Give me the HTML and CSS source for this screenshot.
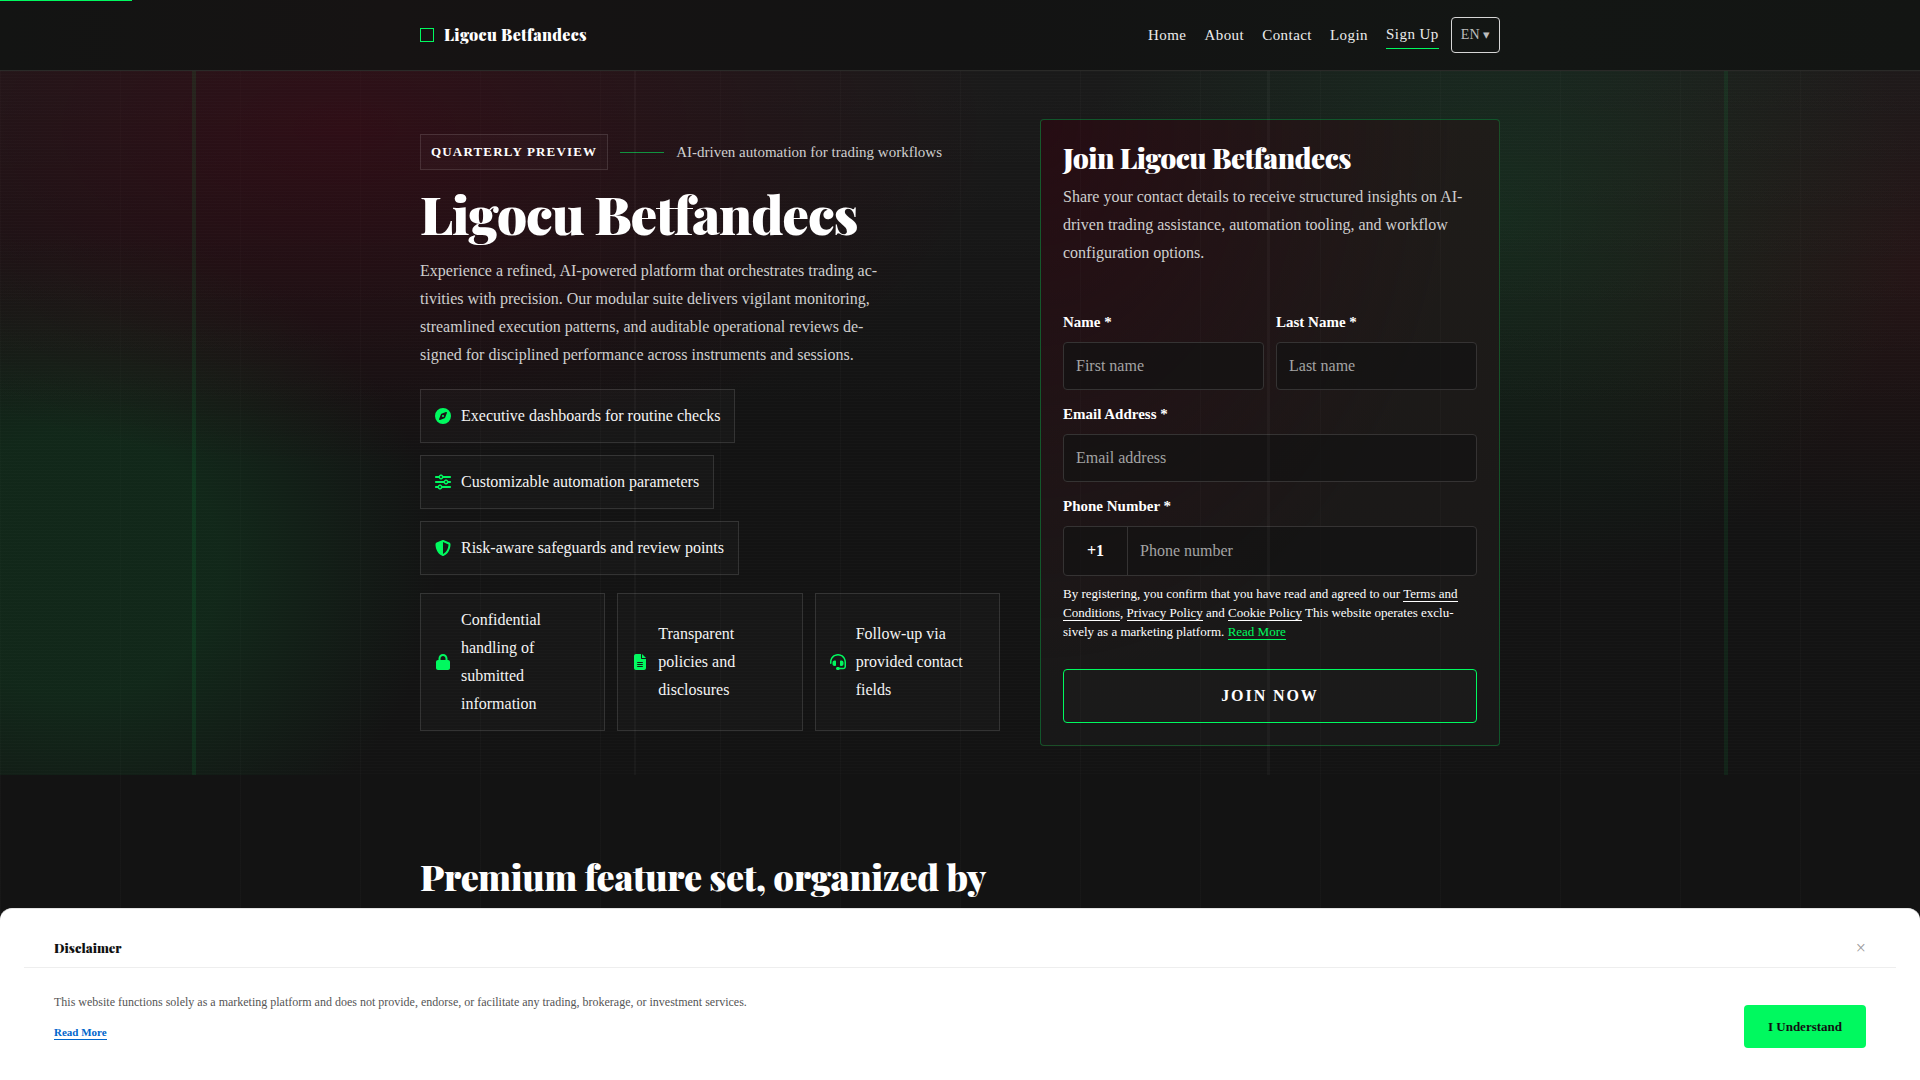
FILE: index.html
```html
<!DOCTYPE html>
<html lang="en">
<head>
    <meta charset="UTF-8">
    <meta name="viewport" content="width=device-width, initial-scale=1.0">
    <title>Ligocu Betfandecs</title>
    <link rel="stylesheet" href="styles.css">
</head>
<body>

<div class="scroll-progress"></div>

<header class="site-header">
    <div class="container header-inner">
        <a class="logo" href="#"><span class="logo-mark"></span>Ligocu Betfandecs</a>
        <nav class="nav">
            <a href="#">Home</a>
            <a href="#">About</a>
            <a href="#">Contact</a>
            <a href="#">Login</a>
            <a href="#signup" class="nav-cta">Sign Up</a>
            <button type="button" class="lang-button">EN <span class="caret">▾</span></button>
        </nav>
    </div>
</header>

<main>
    <section class="hero">
        <div class="container hero-grid">
            <div class="hero-copy">
                <div class="eyebrow">
                    <span class="badge">Quarterly preview</span>
                    <span class="eyebrow-line"></span>
                    <span class="eyebrow-text">AI-driven automation for trading workflows</span>
                </div>
                <h1>Ligocu Betfandecs</h1>
                <p class="lead">Experience a refined, AI-powered platform that orchestrates trading ac&shy;tivities with precision. Our modular suite delivers vigilant monitoring, streamlined execution patterns, and auditable operational reviews de&shy;signed for disciplined performance across instruments and sessions.</p>

                <ul class="features">
                    <li class="chip">
                        <svg class="icon" viewBox="0 0 512 512"><path d="M256 512A256 256 0 1 0 256 0a256 256 0 1 0 0 512zm50.7-186.9L162.4 380.6c-19.4 7.5-38.5-11.6-31-31l55.5-144.3c3.3-8.5 9.9-15.1 18.4-18.4l144.3-55.5c19.4-7.5 38.5 11.6 31 31L325.1 306.7c-3.2 8.5-9.9 15.1-18.4 18.4zM288 256a32 32 0 1 0 -64 0 32 32 0 1 0 64 0z"/></svg>
                        <span>Executive dashboards for routine checks</span>
                    </li>
                    <li class="chip">
                        <svg class="icon" viewBox="0 0 512 512"><path d="M0 416c0 17.7 14.3 32 32 32l54.7 0c12.3 28.3 40.5 48 73.3 48s61-19.7 73.3-48L480 448c17.7 0 32-14.3 32-32s-14.3-32-32-32l-246.7 0c-12.3-28.3-40.5-48-73.3-48s-61 19.7-73.3 48L32 384c-17.7 0-32 14.3-32 32zm128 0a32 32 0 1 1 64 0 32 32 0 1 1 -64 0zM320 256a32 32 0 1 1 64 0 32 32 0 1 1 -64 0zm32-80c-32.8 0-61 19.7-73.3 48L32 224c-17.7 0-32 14.3-32 32s14.3 32 32 32l246.7 0c12.3 28.3 40.5 48 73.3 48s61-19.7 73.3-48l54.7 0c17.7 0 32-14.3 32-32s-14.3-32-32-32l-54.7 0c-12.3-28.3-40.5-48-73.3-48zM192 128a32 32 0 1 1 0-64 32 32 0 1 1 0 64zm73.3-64C253 35.7 224.8 16 192 16s-61 19.7-73.3 48L32 64C14.3 64 0 78.3 0 96s14.3 32 32 32l86.7 0c12.3 28.3 40.5 48 73.3 48s61-19.7 73.3-48L480 128c17.7 0 32-14.3 32-32s-14.3-32-32-32L265.3 64z"/></svg>
                        <span>Customizable automation parameters</span>
                    </li>
                    <li class="chip">
                        <svg class="icon" viewBox="0 0 512 512"><path d="M256 0c4.6 0 9.2 1 13.4 2.9L457.7 82.8c22 9.3 38.4 31 38.3 57.2c-.5 99.2-41.3 280.7-213.6 363.2c-16.7 8-36.1 8-52.8 0C57.3 420.7 16.5 239.2 16 140c-.1-26.2 16.3-47.9 38.3-57.2L242.7 2.9C246.8 1 251.4 0 256 0zm0 66.8V444.8C394 378 431.1 230.1 432 141.4L256 66.8z"/></svg>
                        <span>Risk-aware safeguards and review points</span>
                    </li>
                </ul>

                <ul class="assurances">
                    <li class="chip">
                        <svg class="icon" viewBox="0 0 448 512"><path d="M144 144v48H304V144c0-44.2-35.8-80-80-80s-80 35.8-80 80zM80 192V144C80 64.5 144.5 0 224 0s144 64.5 144 144v48h16c35.3 0 64 28.7 64 64V448c0 35.3-28.7 64-64 64H64c-35.3 0-64-28.7-64-64V256c0-35.3 28.7-64 64-64H80z"/></svg>
                        <span>Confidential handling of submitted information</span>
                    </li>
                    <li class="chip">
                        <svg class="icon" viewBox="0 0 384 512"><path d="M64 0C28.7 0 0 28.7 0 64V448c0 35.3 28.7 64 64 64H320c35.3 0 64-28.7 64-64V160H256c-17.7 0-32-14.3-32-32V0H64zM256 0V128H384L256 0zM112 256H272c8.8 0 16 7.2 16 16s-7.2 16-16 16H112c-8.8 0-16-7.2-16-16s7.2-16 16-16zm0 64H272c8.8 0 16 7.2 16 16s-7.2 16-16 16H112c-8.8 0-16-7.2-16-16s7.2-16 16-16zm0 64H272c8.8 0 16 7.2 16 16s-7.2 16-16 16H112c-8.8 0-16-7.2-16-16s7.2-16 16-16z"/></svg>
                        <span>Transparent policies and disclosures</span>
                    </li>
                    <li class="chip">
                        <svg class="icon" viewBox="0 0 512 512"><path d="M256 48C141.1 48 48 141.1 48 256v40c0 13.3-10.7 24-24 24s-24-10.7-24-24V256C0 114.6 114.6 0 256 0S512 114.6 512 256V400.1c0 48.6-39.4 88-88.1 88L313.6 488c-8.3 14.3-23.8 24-41.6 24H240c-26.5 0-48-21.5-48-48s21.5-48 48-48h32c17.8 0 33.3 9.7 41.6 24l110.4 .1c22.1 0 40-17.9 40-40V256c0-114.9-93.1-208-208-208zM144 208h16c17.7 0 32 14.3 32 32V352c0 17.7-14.3 32-32 32H144c-35.3 0-64-28.7-64-64V272c0-35.3 28.7-64 64-64zm224 0c35.3 0 64 28.7 64 64v48c0 35.3-28.7 64-64 64H352c-17.7 0-32-14.3-32-32V240c0-17.7 14.3-32 32-32h16z"/></svg>
                        <span>Follow-up via provided contact fields</span>
                    </li>
                </ul>
            </div>

            <div class="signup-card" id="signup">
                <h2>Join Ligocu Betfandecs</h2>
                <p class="signup-intro">Share your contact details to receive structured insights on AI-driven trading assistance, automation tooling, and workflow configuration options.</p>

                <form class="signup-form">
                    <div class="field-row">
                        <div class="field">
                            <label for="firstName">Name *</label>
                            <input type="text" id="firstName" name="firstName" placeholder="First name" required>
                        </div>
                        <div class="field">
                            <label for="lastName">Last Name *</label>
                            <input type="text" id="lastName" name="lastName" placeholder="Last name" required>
                        </div>
                    </div>
                    <div class="field">
                        <label for="email">Email Address *</label>
                        <input type="email" id="email" name="email" placeholder="Email address" required>
                    </div>
                    <div class="field">
                        <label for="phone">Phone Number *</label>
                        <div class="phone-group">
                            <span class="phone-code">+1</span>
                            <input type="tel" id="phone" name="phone" placeholder="Phone number" required>
                        </div>
                    </div>
                    <p class="legal">By registering, you confirm that you have read and agreed to our <a href="#">Terms and Conditions</a>, <a href="#">Privacy Policy</a> and <a href="#">Cookie Policy</a> This website operates exclu&shy;sively as a marketing platform. <a href="#" class="read-more">Read More</a></p>
                    <button type="submit" class="submit-button">Join now</button>
                </form>
            </div>
        </div>
    </section>

    <section class="premium">
        <div class="container">
            <h2>Premium feature set, organized by</h2>
        </div>
    </section>
</main>

<aside class="disclaimer">
    <div class="disclaimer-head">
        <h3>Disclaimer</h3>
        <button type="button" class="close-button" aria-label="Close">×</button>
    </div>
    <div class="disclaimer-body">
        <div>
            <p>This website functions solely as a marketing platform and does not provide, endorse, or facilitate any trading, brokerage, or investment services.</p>
            <a href="#">Read More</a>
        </div>
        <button type="button" class="accept-button">I Understand</button>
    </div>
</aside>

</body>
</html>
```

FILE: styles.css
```css
:root {
    --green: #00f95f;
    --bg: #131313;
    --text: #ffffff;
    --muted: #cfcfcf;
    --line: rgba(255, 255, 255, 0.12);
    --serif: "Liberation Serif", "Times New Roman", serif;
    --display: "Playfair Display", "Liberation Serif", serif;
}

* {
    box-sizing: border-box;
}

body {
    margin: 0;
    min-height: 100vh;
    font-family: var(--serif);
    font-size: 16px;
    line-height: 28px;
    color: var(--text);
    background-color: var(--bg);
    /* faint 120px column grid */
    background-image: repeating-linear-gradient(90deg, rgba(255, 255, 255, 0.02) 0 1px, transparent 1px 120px);
}

h1, h2, h3, p, ul {
    margin: 0;
    padding: 0;
}

h1, h2, h3 {
    font-family: var(--display);
    font-weight: 900;
}

ul {
    list-style: none;
}

button, input {
    font-family: inherit;
}

button {
    cursor: pointer;
}

.container {
    width: 100%;
    max-width: 1080px;
    margin: 0 auto;
}

.scroll-progress {
    position: fixed;
    top: 0;
    left: 0;
    z-index: 20;
    width: 132px;
    height: 1px;
    background: var(--green);
}

/* header */
.site-header {
    border-bottom: 1px solid #2a2a28;
    background: linear-gradient(90deg, #131413, #161313 20%, #131313 50%, #131614 80%, #131513);
}

.header-inner {
    display: flex;
    align-items: center;
    justify-content: space-between;
    height: 70px;
}

.logo {
    display: flex;
    align-items: center;
    gap: 10px;
    font-family: var(--display);
    font-size: 16px;
    font-weight: 900;
    letter-spacing: 0.02em;
    color: var(--text);
    text-decoration: none;
}

.logo-mark {
    width: 14px;
    height: 14px;
    border: 1px solid var(--green);
}

.nav {
    display: flex;
    align-items: center;
    gap: 18px;
}

.nav a {
    font-size: 15px;
    letter-spacing: 0.03em;
    color: #ececec;
    text-decoration: none;
}

.nav .nav-cta {
    padding-bottom: 1px;
    border-bottom: 1px solid var(--green);
    line-height: 26px;
}

.lang-button {
    height: 36px;
    margin-left: -6px;
    padding: 0 9px;
    border: 1px solid #d6d6d6;
    border-radius: 4px;
    background: none;
    font-size: 14px;
    color: #bdbdbd;
}

.caret {
    font-size: 13px;
}

/* hero */
.hero {
    position: relative;
    padding: 48px 0 29px;
    background:
        linear-gradient(90deg, transparent 10%, rgba(0, 249, 95, 0.08) 10% calc(10% + 4px), transparent calc(10% + 4px)),
        linear-gradient(90deg, transparent calc(90% - 4px), rgba(0, 249, 95, 0.07) calc(90% - 4px) 90%, transparent 90%),
        repeating-linear-gradient(180deg, rgba(255, 255, 255, 0.01) 0 1px, transparent 1px 3px),
        linear-gradient(180deg, rgba(255, 255, 255, 0.03), transparent 50%),
        radial-gradient(660px 340px at 18% 8%, rgba(56, 0, 14, 0.6), transparent),
        radial-gradient(360px 330px at 4% 70%, rgba(15, 70, 35, 0.4) 40%, transparent),
        radial-gradient(420px 380px at 78% 20%, rgba(12, 92, 44, 0.28), transparent),
        radial-gradient(520px 280px at 101% 28%, rgba(80, 15, 20, 0.25), transparent);
}

/* thin column lines that run over the card as well */
.hero::after {
    content: "";
    position: absolute;
    inset: 0;
    pointer-events: none;
    background:
        linear-gradient(90deg, transparent 33%, rgba(255, 255, 255, 0.03) 33% calc(33% + 2px), transparent calc(33% + 2px)),
        linear-gradient(90deg, transparent 66%, rgba(255, 255, 255, 0.03) 66% calc(66% + 3px), transparent calc(66% + 3px));
}

.hero-grid {
    display: grid;
    grid-template-columns: minmax(0, 1fr) 460px;
    gap: 40px;
    align-items: center;
}

.eyebrow {
    display: flex;
    align-items: center;
    gap: 12px;
}

.badge {
    padding: 3px 10px;
    border: 1px solid var(--line);
    background: rgba(255, 255, 255, 0.02);
    font-size: 13px;
    font-weight: bold;
    letter-spacing: 0.09em;
    text-transform: uppercase;
}

.eyebrow-line {
    width: 44px;
    height: 1px;
    background: rgba(0, 249, 95, 0.55);
}

.eyebrow-text {
    font-size: 15px;
    color: var(--muted);
}

h1 {
    margin: 14px 0 15px;
    font-size: 53px;
    line-height: 58px;
    letter-spacing: -0.02em;
}

.lead {
    max-width: 460px;
    color: var(--muted);
}

.features {
    display: flex;
    flex-direction: column;
    align-items: flex-start;
    gap: 12px;
    margin: 20px 0 18px;
}

.assurances {
    display: grid;
    grid-template-columns: repeat(3, 1fr);
    gap: 12px;
}

.chip {
    display: flex;
    align-items: center;
    gap: 10px;
    padding: 12px 14px;
    border: 1px solid var(--line);
    background: rgba(255, 255, 255, 0.02);
    color: #f4f4f4;
}

.icon {
    flex: none;
    width: 16px;
    height: 16px;
    fill: var(--green);
}

/* sign up form */
.signup-card {
    padding: 22px;
    border: 1px solid rgba(0, 249, 95, 0.28);
    border-radius: 4px;
    background:
        repeating-linear-gradient(90deg, transparent 0 39px, rgba(255, 255, 255, 0.015) 39px 40px, transparent 40px 120px),
        radial-gradient(420px 560px at 0% 0%, rgba(44, 0, 14, 0.55), transparent),
        linear-gradient(180deg, #1f1c19, #1b1918 60%, #181818);
}

.signup-card h2 {
    font-size: 28px;
    line-height: 31px;
    letter-spacing: -0.02em;
}

.signup-intro {
    margin: 10px 0 43px;
    color: var(--muted);
}

.signup-form {
    display: flex;
    flex-direction: column;
    gap: 12px;
}

.field-row {
    display: grid;
    grid-template-columns: 1fr 1fr;
    gap: 12px;
}

.field label {
    display: block;
    margin-bottom: 7px;
    font-size: 15px;
    font-weight: bold;
    line-height: 25px;
}

.field input {
    width: 100%;
    height: 48px;
    padding: 0 12px;
    border: 1px solid #353333;
    border-radius: 4px;
    background: rgba(19, 19, 19, 0.7);
    font-size: 16px;
    color: var(--text);
}

.field input::placeholder {
    color: #a3a3a3;
    opacity: 1;
}

.phone-group {
    display: flex;
    border: 1px solid #353333;
    border-radius: 4px;
    background: rgba(19, 19, 19, 0.7);
}

.phone-code {
    display: flex;
    align-items: center;
    justify-content: center;
    width: 64px;
    border-right: 1px solid #353333;
    font-weight: bold;
}

.phone-group input {
    flex: 1;
    border: none;
    background: none;
}

.legal {
    margin-top: -4px;
    font-size: 13px;
    line-height: 19px;
}

.legal a {
    border-bottom: 1px solid currentColor;
    color: inherit;
    text-decoration: none;
}

.legal .read-more {
    color: var(--green);
}

.submit-button {
    height: 54px;
    margin-top: 16px;
    border: 1px solid var(--green);
    border-radius: 4px;
    background: rgba(255, 255, 255, 0.01);
    font-size: 16px;
    font-weight: bold;
    letter-spacing: 0.12em;
    text-transform: uppercase;
    color: var(--text);
}

/* premium section */
.premium {
    padding-top: 81px;
}

.premium h2 {
    font-size: 36px;
    line-height: 40px;
    letter-spacing: -0.01em;
}

/* disclaimer bar */
.disclaimer {
    position: fixed;
    right: 0;
    bottom: 0;
    left: 0;
    z-index: 10;
    padding: 20px 24px 32px;
    border-top: 1px solid #e5e5e5;
    border-radius: 12px 12px 0 0;
    background: #ffffff;
    color: #111111;
}

.disclaimer-head {
    display: flex;
    align-items: center;
    justify-content: space-between;
    height: 39px;
    padding: 0 30px;
    border-bottom: 1px solid #eeeeee;
}

.disclaimer-head h3 {
    font-size: 13px;
}

.close-button {
    padding: 0;
    border: none;
    background: none;
    font-size: 18px;
    line-height: 20px;
    color: #999999;
}

.disclaimer-body {
    display: flex;
    align-items: flex-end;
    justify-content: space-between;
    padding: 24px 30px 0;
}

.disclaimer-body p {
    margin-bottom: 14px;
    font-size: 12px;
    line-height: 20px;
    color: #555555;
}

.disclaimer-body a {
    display: block;
    width: fit-content;
    margin-bottom: 8px;
    border-bottom: 1px solid #0066cc;
    font-size: 11px;
    font-weight: bold;
    line-height: 13px;
    color: #0066cc;
    text-decoration: none;
}

.accept-button {
    height: 43px;
    padding: 0 24px;
    border: none;
    border-radius: 4px;
    background: var(--green);
    font-size: 13px;
    font-weight: bold;
    color: #111111;
}
```
